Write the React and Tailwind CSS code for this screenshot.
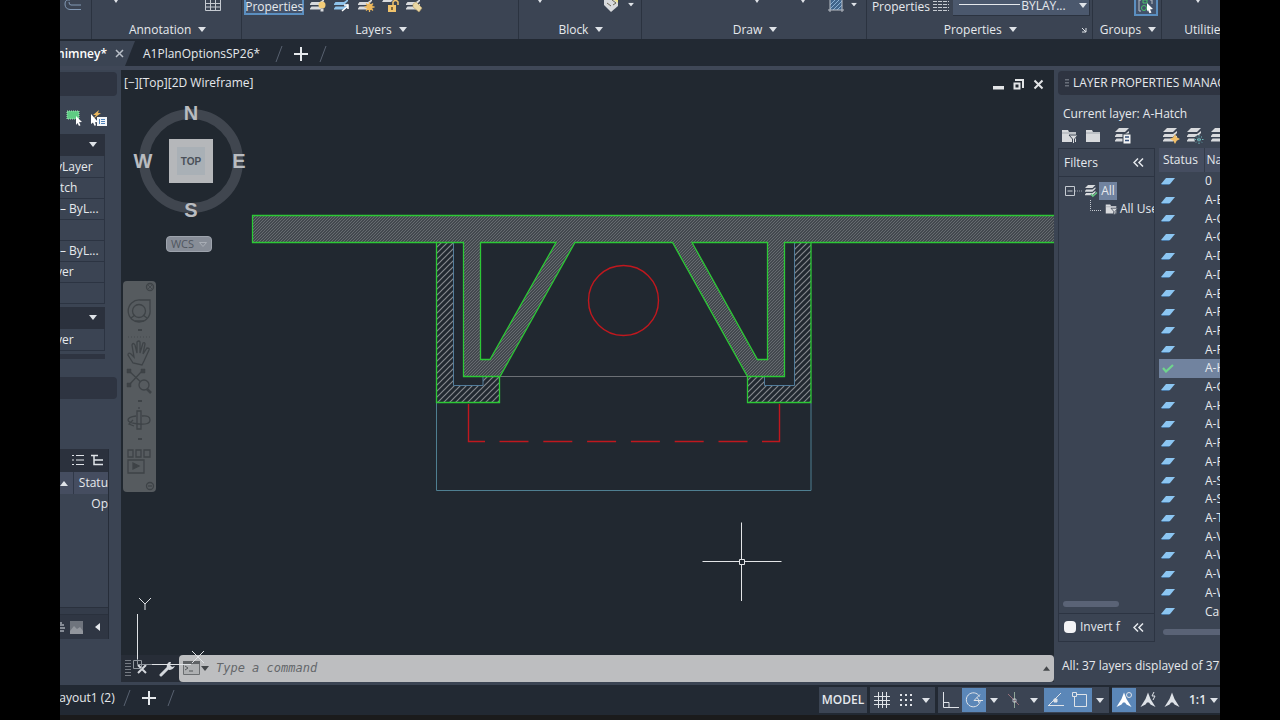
import clsx from "clsx";

const LAYERS = [
  "0", "A-E", "A-C", "A-C", "A-D", "A-D", "A-E", "A-F", "A-F", "A-F", "A-H", "A-G",
  "A-H", "A-L", "A-P", "A-R", "A-S", "A-S", "A-T", "A-V", "A-W", "A-W", "A-W", "Ca",
];

const PROPERTY_ROWS = ["yLayer", "tch", "– ByL...", "", "– ByL...", "yer", ""];

function Caret({ className }) {
  return (
    <svg viewBox="0 0 8 5" className={clsx("w-2 h-[5px] shrink-0", className)} fill="#dfe3e8">
      <path d="M0 0h8L4 5z" />
    </svg>
  );
}

function LayerStack({ badge, blue }) {
  const c = blue ? "#8fc3ea" : "#d8dadd";
  return (
    <svg viewBox="0 0 18 18" className="w-[18px] h-[18px] shrink-0">
      <path d="M5 1h10l-4 4H1z" fill="#d8dadd" />
      <path d="M1 9l1.500-2H11l4-3v2l-4 4H1zM1 13.500l1.500-2H11l4-3v2l-4 4H1z" fill={c} />
      {badge === "bulb" && (
        <g>
          <circle cx="13" cy="10" r="3.500" fill="#f3cd78" />
          <path d="M11.500 13.500h3v3h-3z" fill="#d8dadd" />
        </g>
      )}
      {badge === "arrow" && <path d="M9 16l6-5M11 10h4v4" stroke="#fff" strokeWidth="1.500" fill="none" />}
      {badge === "sun" && (
        <g stroke="#edb85c" strokeWidth="1.300">
          <circle cx="12.500" cy="12" r="2.500" fill="#f3cd78" />
          <path d="M12.500 7v10M7.500 12h10M9 8.500l7 7M16 8.500l-7 7" />
        </g>
      )}
      {badge === "tag" && <path d="M8 9l3-2 6 6-3 4-6-5z" fill="#e9d7a5" stroke="#b89d67" strokeWidth=".6" />}
      {badge === "star" && <path d="M13 7l1.700 3.300L18 12l-3.300 1.700L13 17l-1.700-3.300L8 12l3.300-1.700z" fill="#f2bf69" />}
      {badge === "frost" && (
        <g>
          <circle cx="13" cy="12.500" r="4.500" fill="#3b4453" />
          <path d="M13 8v9M8.500 12.500h9M10 9.500l6 6M16 9.500l-6 6" stroke="#6fb9bd" strokeDasharray="1.500 1" fill="none" />
        </g>
      )}
      {badge === "check" && <path d="M9 13l2.500 3L17 11" stroke="#64c781" strokeWidth="2" fill="none" />}
      {badge === "card" && (
        <g>
          <path d="M9 7h8v10H9z" fill="#f1f2f3" stroke="#3b4453" />
          <path d="M11 10h4M11 13.500h4" stroke="#35507a" strokeWidth="1.500" />
        </g>
      )}
    </svg>
  );
}

function Folder({ filter }) {
  return (
    <svg viewBox="0 0 18 18" className="w-[18px] h-[18px] shrink-0" fill="#d8dadd">
      <path d="M2 3h6l1 2h7v10H2z" />
      <path d="M2 6h14" stroke="#8d939c" strokeWidth=".7" />
      {filter && <path d="M9 8h9l-3.500 4v5l-2-1v-4z" stroke="#3b4453" strokeWidth="1" />}
    </svg>
  );
}

function FlyoutTip({ className }) {
  return (
    <svg viewBox="0 0 8 4" className={clsx("w-2 h-1 shrink-0", className)}>
      <path d="M2 0h4L4 3z" fill="#dfe3e8" />
    </svg>
  );
}

function RibbonPanel({ name, className, children, launcher }) {
  return (
    <section className={clsx("relative min-w-0 flex flex-col border-r border-[#2b3340]", className)}>
      <div className="h-[18px]">{children}</div>
      {name && (
        <button className="h-[21px] pt-[2px] pl-[2px] flex items-center justify-center gap-[7px] whitespace-nowrap">
          {name}
          <Caret />
        </button>
      )}
      {launcher && (
        <svg viewBox="0 0 6 6" className="absolute right-[5px] bottom-[6px] w-[6px] h-[6px]">
          <path d="M1 1l4 4M5 1v4H1" stroke="#dfe3e8" fill="none" />
        </svg>
      )}
    </section>
  );
}

function Ribbon() {
  return (
    <header className="flex h-[39px] shrink-0 bg-[#3b4453] overflow-hidden">
      <RibbonPanel className="w-8 shrink-0">
        <svg viewBox="0 0 20 16" className="ml-[3px] w-5 h-4">
          <path d="M18 9.500H7Q2 9 2 4T7 0M18 5H8Q6 5 6 2" stroke="#8299b5" fill="none" />
        </svg>
      </RibbonPanel>
      <RibbonPanel name="Annotation" className="flex-[150]">
        <div className="flex justify-between pl-5 pr-5">
          <FlyoutTip />
          <svg viewBox="0 0 16 12" className="w-4 h-3">
            <path d="M.5 0v10.500h15V0M.5 3.500h15M.5 7h15M5.500 0v10M10.500 0v10" stroke="#c5cad1" fill="none" />
          </svg>
        </div>
      </RibbonPanel>
      <RibbonPanel name="Layers" className="flex-[277]">
        <div className="flex items-start">
          <button className="ml-[2px] h-[15px] w-[60px] shrink-0 border-2 border-t-0 border-[#5b8fc0] bg-[#43526a] flex items-center justify-center leading-3">
            Properties
          </button>
          <div className="-mt-[5px] ml-[5px] flex gap-[6px]">
            <LayerStack badge="bulb" />
            <LayerStack badge="arrow" blue />
            <LayerStack badge="sun" />
            <svg viewBox="0 0 18 18" className="w-[18px] h-[18px] shrink-0">
              <path d="M3 4h10l-3 3H1z" fill="#d8dadd" />
              <path d="M7 10h8v7H7z" fill="#f0c36c" />
              <path d="M12 10V7q2.500-3 5 0v3" stroke="#f0c36c" strokeWidth="1.500" fill="none" />
              <path d="M11 12v3" stroke="#5a4a28" strokeWidth="1.500" />
            </svg>
            <LayerStack badge="tag" />
          </div>
        </div>
      </RibbonPanel>
      <RibbonPanel name="Block" className="flex-[123]">
        <div className="flex justify-between items-start pl-[17px] pr-[6px]">
          <FlyoutTip />
          <div className="flex gap-2">
            <svg viewBox="0 0 16 12" className="w-4 h-3">
              <path d="M1 0v5l7 7 7-6V0z" fill="#d8dadd" />
              <path d="M9 0l4 3-3 2M4 3l4 3" stroke="#6d6855" fill="none" />
              <path d="M11 0h4v3z" fill="#eee48c" />
            </svg>
            <Caret className="mt-[2px] scale-75" />
          </div>
        </div>
      </RibbonPanel>
      <RibbonPanel name="Draw" className="flex-[225]">
        <div className="flex justify-end items-start pr-[8px]">
          <FlyoutTip />
          <FlyoutTip className="ml-[38px]" />
          <svg viewBox="0 0 16 13" className="ml-[21px] w-4 h-[13px]">
            <path d="M2 0h12v10H2z" fill="#40658c" />
            <path d="M2 5l5-5M2 9l9-9M5 10l9-9M9 10l5-5" stroke="#9cc3e6" strokeWidth=".8" />
            <path d="M2 0v12M14 0v12M0 10h16" stroke="#b9bec6" fill="none" />
          </svg>
          <Caret className="ml-[6px] mt-[2px] scale-75" />
        </div>
      </RibbonPanel>
      <RibbonPanel name="Properties" className="flex-[226]" launcher>
        <div className="flex items-start pl-[5px] pr-[2px]">
          <span className="leading-[13px]">Properties</span>
          <svg viewBox="0 0 16 12" className="ml-[3px] w-4 h-3 shrink-0">
            <path d="M0 1.500h16M0 4.500h16M0 7.500h16M0 10.500h16" stroke="#c5cad1" strokeDasharray="4 1" />
          </svg>
          <button className="ml-[4px] h-4 flex-1 min-w-0 flex items-start gap-px pl-[6px] pr-[2px] bg-[#4b586d] border-b border-r border-[#2b3340] leading-[11px]">
            <span className="mt-1 h-px flex-1 bg-[#e6e9ed]" />
            BYLAY...
            <Caret className="ml-[12px] mt-[3px]" />
          </button>
        </div>
      </RibbonPanel>
      <RibbonPanel name="Groups" className="flex-[69]">
        <button className="block ml-auto mr-[3px] w-6 h-4 border-2 border-t-0 border-[#5b8fc0] bg-[#43526a]" aria-label="Group selection">
          <svg viewBox="0 0 20 14" className="w-5 h-[14px]">
            <path d="M5 0H3v11h2M14 0h2v4" stroke="#b9bec6" fill="none" />
            <circle cx="8" cy="8" r="2.500" stroke="#4cc26c" fill="none" />
            <path d="M7 0h4v3H7z" stroke="#4cc26c" fill="none" />
            <path d="M11 3l6 6-3 .5 1.500 3-2 .8L12 10l-1 1.500z" fill="#fff" />
          </svg>
        </button>
      </RibbonPanel>
      <div className="flex-[58] min-w-0">
        <div className="h-[18px] pl-8">
          <FlyoutTip />
        </div>
        <button className="h-[21px] pt-[2px] pl-[22px] flex items-center">Utilities</button>
      </div>
    </header>
  );
}

function Slash() {
  return (
    <svg viewBox="0 0 8 18" className="w-2 h-[18px] shrink-0">
      <path d="M1 17L7 1" stroke="#586170" />
    </svg>
  );
}

function Plus() {
  return (
    <svg viewBox="0 0 14 14" className="w-[14px] h-[14px]">
      <path d="M7 0v14M0 7h14" stroke="#e6e9ed" strokeWidth="2" />
    </svg>
  );
}

function FileTabs() {
  return (
    <nav className="h-[27px] shrink-0 flex items-center bg-[#222933]">
      <div className="relative h-full w-[75px] shrink-0 flex items-center pt-[2px]">
        <svg viewBox="0 0 75 27" preserveAspectRatio="none" className="absolute inset-0 w-full h-full">
          <path d="M0 2h75L65 27H0z" fill="#3b4453" />
        </svg>
        <button className="relative h-full w-[47px] flex items-center justify-end font-semibold text-white whitespace-nowrap">
          himney*
        </button>
        <button className="relative ml-2" aria-label="Close drawing">
          <svg viewBox="0 0 9 9" className="w-[9px] h-[9px]">
            <path d="M1 1l7 7M8 1L1 8" stroke="#b9bfc8" strokeWidth="1.500" />
          </svg>
        </button>
      </div>
      <button className="ml-2 pt-[3px] w-28 text-left whitespace-nowrap">A1PlanOptionsSP26*</button>
      <div className="ml-5 pt-[2px] flex items-center gap-[11px]">
        <Slash />
        <button aria-label="New drawing"><Plus /></button>
        <Slash />
      </div>
    </nav>
  );
}

function PropertiesPalette() {
  return (
    <aside className="w-[61px] shrink-0 bg-[#3b4453] flex flex-col overflow-hidden whitespace-nowrap">
      <div className="mt-[2px] mr-1 h-6 shrink-0 rounded-r bg-[#2e3441]" />
      <div className="h-[38px] shrink-0 flex items-center gap-[6px] pl-[6px] pt-[6px]">
        <svg viewBox="0 0 18 18" className="w-[18px] h-[18px]">
          <path d="M1 2h12v8H1z" fill="#5fcb83" stroke="#a8e5ba" strokeDasharray="1 1" />
          <path d="M10 7l6 6-3 .3 1.500 3-1.500.7-1.500-3L10 16z" fill="#fff" />
        </svg>
        <svg viewBox="0 0 18 18" className="w-[18px] h-[18px]">
          <path d="M9 1L3 6h3L3 10l8-6H8z" fill="#e9b65c" />
          <path d="M1 5l7 8-3 .2 1 3-1.500.6L3 13.500 1 15z" fill="#fff" />
          <path d="M7 8h10v9H7z" fill="#f3f5f7" />
          <path d="M9.500 10v5M11 10.500h4M11 12.500h4M11 14.500h4" stroke="#5182b8" />
        </svg>
      </div>
      <button className="mr-4 h-[22px] shrink-0 flex items-center justify-end pr-2 pb-px bg-[#2b313d]" aria-label="General">
        <Caret />
      </button>
      <div className="mr-4 pt-px shrink-0 border-r border-[#2c3442]">
        {PROPERTY_ROWS.map((row, i) => (
          <div key={i} className="h-[21px] flex items-center border-b border-[#2c3442] leading-4">
            <span className={clsx(row.startsWith("y") && "-ml-1")}>{row}</span>
          </div>
        ))}
      </div>
      <button className="mt-[3px] mr-4 h-[22px] shrink-0 flex items-center justify-end pr-2 pb-px bg-[#2b313d]" aria-label="3D Visualization">
        <Caret />
      </button>
      <div className="mr-4 h-[22px] shrink-0 flex items-center border-r border-b border-[#2c3442]">
        <span className="-ml-1">yer</span>
      </div>
      <div className="mt-[3px] mr-4 h-[5px] shrink-0 bg-[#2e3441]" />
      <div className="mt-[18px] mr-1 h-[22px] shrink-0 rounded-r bg-[#2e3441]" />
      <div className="mt-[50px] mr-3 flex-1 min-h-0 flex flex-col border-r border-[#262d39]">
        <div className="h-[23px] shrink-0 flex items-center justify-end gap-[7px] pr-[5px] pb-px bg-[#2b313d]">
          <svg viewBox="0 0 12 12" className="w-3 h-3">
            <path d="M0 1.500h2M0 6h2M0 10.500h2M4 1.500h8M4 6h8M4 10.500h8" stroke="#dfe3e8" strokeWidth="1.200" />
          </svg>
          <svg viewBox="0 0 12 12" className="w-3 h-3">
            <path d="M0 1.500h7M3 2v8.500h3M3 6h3M6 6h6M6 10.500h6" stroke="#dfe3e8" strokeWidth="1.500" fill="none" />
          </svg>
        </div>
        <div className="h-[22px] shrink-0 flex items-center bg-[#454d60]">
          <span className="w-4 h-full border-r border-[#303848] flex items-center">
            <Caret className="rotate-180" />
          </span>
          <span className="ml-[5px]">Statu</span>
        </div>
        <div className="h-5 shrink-0 flex items-center justify-end">Op</div>
        <div className="flex-1" />
        <div className="h-2 shrink-0 bg-[#343c4a] border-y border-[#2a313d]" />
        <div className="h-6 shrink-0 flex items-center bg-[#2f3643]">
          <svg viewBox="0 0 6 12" className="w-[6px] h-3">
            <path d="M0 1h2v2h2v2H0zM0 6h5v2H0zM0 9h4v2H0z" fill="#858b95" />
          </svg>
          <svg viewBox="0 0 13 13" className="ml-[4px] w-[13px] h-[13px]">
            <path d="M0 0h13v13H0z" fill="#6f747d" />
            <path d="M0 10l4-5 3 3 3-2 3 4v3H0z" fill="#92969d" />
          </svg>
          <button className="ml-auto mr-2" aria-label="Collapse">
            <svg viewBox="0 0 5 8" className="w-[5px] h-2"><path d="M5 0v8L0 4z" fill="#e6e9ed" /></svg>
          </button>
        </div>
      </div>
      <div className="h-[46px] shrink-0" />
    </aside>
  );
}

// Chimney plan in window coordinates
function Plan() {
  return (
    <svg viewBox="121 70 933 585" preserveAspectRatio="xMinYMin slice" className="absolute inset-0 w-full h-full">
      <defs>
        <pattern id="dense" width="3" height="3" patternUnits="userSpaceOnUse">
          <path d="M0 0h3v3H0z" fill="#43484e" />
          <path d="M-1 1L1-1M0 3L3 0M2 4L4 2" stroke="#6f7378" strokeWidth=".8" />
        </pattern>
        <pattern id="brick" width="6" height="6" patternUnits="userSpaceOnUse">
          <path d="M-1 1L1-1M0 6L6 0M5 7L7 5" stroke="#85888d" strokeWidth="1.200" />
        </pattern>
      </defs>
      <path d="M436.500 403V490.500H811V403" stroke="#4f7f91" fill="none" />
      <path d="M500 376.500H748" stroke="#6c7075" />
      <path d="M436.500 242.500H453.500V386H483V376.500H500V403H436.500z" fill="url(#brick)" />
      <path d="M811 242.500H794.500V386H764.500V376.500H747.500V403H811z" fill="url(#brick)" />
      <path d="M453.500 242.500V385.500H483V376.500M794.500 242.500V385.500H764.500V376.500" stroke="#527c9b" fill="none" />
      <g stroke="#2cc835" strokeWidth="1.300">
        <path d="M436.500 242.500V402.500H499.500V376.500M811 242.500V402.500H747.500V376.500" fill="none" />
        <path
          d="M252.500 215.500H1060V242.500H784.500V376.500H747.500L672.500 242.500H575L500 376.500H463.500V242.500H252.500zM480.500 242.500V359.500H490L556 242.500zM692 242.500L757.500 359.500H767.500V242.500z"
          fill="url(#dense)"
          fillRule="evenodd"
        />
      </g>
      <g stroke="#c0181e" strokeWidth="1.400" fill="none">
        <circle cx="623.500" cy="300.500" r="35" />
        <path d="M468.500 404V441.500H485" />
        <path d="M499.500 441.500H762" strokeDasharray="29 14.800" />
        <path d="M762 441.500H779.500V404" />
      </g>
      <path d="M741.500 522.500V559M741.500 564V601M702.500 561.500H739M744 561.500H781.500M739.500 559.500h5v5h-5z" stroke="#e3e5e7" fill="none" />
    </svg>
  );
}

function ViewCube() {
  return (
    <svg viewBox="0 0 116 150" className="w-[116px] h-[150px] shrink-0" fontFamily="Liberation Sans, Arial, sans-serif">
      <circle cx="60" cy="61" r="47" fill="none" stroke="#40464f" strokeWidth="10" />
      <g fill="#b9bcc0" fontWeight="bold" fontSize="20" textAnchor="middle">
        <text x="60" y="20">N</text>
        <text x="60" y="117">S</text>
        <text x="12" y="68">W</text>
        <text x="108" y="68">E</text>
      </g>
      <path d="M38 39h44v44H38z" fill="#b5b7ba" />
      <path d="M46 47h28v28H46z" fill="#a9b0b6" />
      <text x="60" y="65" textAnchor="middle" fontSize="10" fontWeight="bold" fill="#4a5059">
        TOP
      </text>
    </svg>
  );
}

function NavBar() {
  return (
    <div className="w-[33px] h-[211px] rounded bg-[#565b5f]">
      <svg viewBox="0 0 33 211" className="w-full h-full" fill="none" stroke="#3e4347" strokeWidth="1.300">
        <circle cx="27" cy="6" r="3.500" />
        <path d="M25 4l4 4M29 4l-4 4" strokeWidth=".8" />
        <path d="M17 19h10v9a11 11 0 1 1-10-9z" />
        <circle cx="16" cy="30" r="6.500" />
        <path d="M8 37l4-3M24 37l-4-3M12 40h9" />
        <path d="M15 49h4M15 120h4M15 158h4" strokeWidth="2" />
        <path d="M5 56h22" strokeDasharray="1 2" strokeWidth=".7" />
        <path d="M10 82l-5-8q0-3 3-1l3 3-2-12q1-3 3 0l2 8 0-11q2-2 3 0v11l3-10q2-1 2 1l-2 10 4-6q3 0 2 2l-5 11-2 4z" />
        <path d="M6 90l15 14M19 90L6 104" />
        <path d="M4 88h4v4H4zM18 88h4v4h-4zM4 102h4v4H4z" fill="#3e4347" strokeWidth=".5" />
        <circle cx="21" cy="104" r="5" fill="#565b5f" />
        <path d="M24 108l4 4" strokeWidth="2.500" />
        <path d="M14 130h4v18h-4z" />
        <path d="M13 135q-8 1-8 4t11 4 11-4-8-4M10 139l-4 4 5 2M16 126v2" />
        <path d="M5 169h5v7H5zM13 169h5v7h-5zM21 169h6v7h-6zM5 179h16v13H5z" />
        <path d="M10 182v6l6-3z" fill="#3e4347" />
        <circle cx="27" cy="205" r="3.500" />
        <path d="M25 205h4" />
      </svg>
    </div>
  );
}

function CommandLine() {
  return (
    <div className="relative h-[27px] flex items-center bg-[#272d37]">
      <svg viewBox="0 0 6 18" className="ml-1 w-[6px] h-[18px] shrink-0">
        <path d="M1 0v18M3 0v18M5 0v18" stroke="#c7cbd1" strokeDasharray="1 2" />
      </svg>
      <button className="ml-[6px]" aria-label="Close command line">
        <svg viewBox="0 0 10 10" className="w-[10px] h-[10px]">
          <path d="M1 1l8 8M9 1L1 9" stroke="#d3d7dc" strokeWidth="2" />
        </svg>
      </button>
      <button className="ml-3 mr-[4px]" aria-label="Customize">
        <svg viewBox="0 0 16 16" className="w-4 h-4">
          <path d="M2 14l8-8" stroke="#d3d7dc" strokeWidth="3" strokeLinecap="round" />
          <path d="M10 1q-3 2-2 6l2 2q4 0 6-4l-3 1-2-2 1-3z" fill="#d3d7dc" />
        </svg>
      </button>
      <div className="h-full flex-1 flex items-center rounded-sm bg-[#bdbec0] pl-1 pr-1 pb-px">
        <svg viewBox="0 0 17 14" className="w-[17px] h-[14px] shrink-0">
          <path d="M.5.5h16v13H.5z" stroke="#6b6e71" fill="#aeb0b2" />
          <path d="M0 0h17v3H0z" fill="#5f6265" />
          <path d="M2 5l3 2-3 2M6 10h4" stroke="#55585b" fill="none" />
        </svg>
        <svg viewBox="0 0 8 5" className="ml-px w-2 h-[5px] shrink-0"><path d="M0 0h8L4 5z" fill="#44474a" /></svg>
        <input
          type="text"
          aria-label="Command"
          placeholder="Type a command"
          className="ml-[7px] flex-1 min-w-0 bg-transparent outline-none italic text-[12px] font-['DejaVu_Sans_Mono',monospace] placeholder:text-[#64676a]"
        />
        <button aria-label="Command history">
          <svg viewBox="0 0 8 5" className="w-[7px] h-[5px]"><path d="M0 5h8L4 0z" fill="#44474a" /></svg>
        </button>
      </div>
    </div>
  );
}

function Viewport() {
  return (
    <main className="relative flex-1 min-w-0 flex flex-col bg-[#212830]">
      <div className="relative flex-1 min-h-0 overflow-hidden">
        <Plan />
        <div className="relative flex items-center justify-between pl-[3px] pr-[10px] h-[26px]">
          <span className="whitespace-nowrap">[−][Top][2D Wireframe]</span>
          <div className="flex items-center gap-[9px] pt-[2px]">
            <button aria-label="Minimize">
              <svg viewBox="0 0 11 11" className="w-[11px] h-[11px]"><path d="M0 7h11v3.500H0z" fill="#e3e5e7" /></svg>
            </button>
            <button aria-label="Restore">
              <svg viewBox="0 0 11 11" className="w-[11px] h-[11px]">
                <path d="M3 2V1h7v7H9M1.500 4.500h5v5h-5z" stroke="#e3e5e7" strokeWidth="2" fill="none" />
              </svg>
            </button>
            <button aria-label="Close">
              <svg viewBox="0 0 11 11" className="w-[11px] h-[11px]">
                <path d="M1.500 1.500l8 8M9.500 1.500L1.500 9.500" stroke="#e3e5e7" strokeWidth="2" />
              </svg>
            </button>
          </div>
        </div>
        <div className="relative w-[136px] flex justify-center mt-1">
          <ViewCube />
          <button className="absolute left-[45px] bottom-[-2px] w-[46px] h-4 rounded bg-[#878d97] border border-[#9ea4ad] flex items-center justify-center gap-[5px] text-[11px] text-[#50565f]">
            WCS
            <svg viewBox="0 0 8 5" className="w-2 h-[5px]"><path d="M.5.5h7L4 4.500z" stroke="#a8adb5" fill="none" /></svg>
          </button>
        </div>
        <div className="relative ml-[2px] mt-[31px]">
          <NavBar />
        </div>
      </div>
      <CommandLine />
      <svg viewBox="0 0 90 85" className="absolute left-0 bottom-0 w-[90px] h-[85px] pointer-events-none" fill="none" stroke="#dfe2e5">
        <path d="M16.500 17v45M31 67.500h39" />
        <path d="M12.500 63.500h8v8h-8zM16.500 62v5.500H31" stroke="#8f959c" />
        <path d="M18 1l6 6 6-6M24 7v6" />
        <path d="M71 54l12 12M83 54L71 66" />
      </svg>
    </main>
  );
}

function LayerPanel() {
  return (
    <aside className="w-[166px] shrink-0 flex flex-col bg-[#3b4453] pl-1 overflow-hidden whitespace-nowrap">
      <div className="mt-px h-6 shrink-0 flex items-center gap-[4px] pl-[7px] rounded-l bg-[#2e3441]">
        <svg viewBox="0 0 4 8" className="w-1 h-2 shrink-0">
          <path d="M1 0v8M3 0v8" stroke="#a4aab4" strokeDasharray="1.500 1.500" />
        </svg>
        LAYER PROPERTIES MANAGER
      </div>
      <div className="mt-[11px] pl-[5px] h-4 shrink-0 leading-4">Current layer: A-Hatch</div>
      <div className="h-[26px] shrink-0 flex items-center gap-[6px] pl-[2px] pt-[2px]">
        <Folder filter />
        <Folder />
        <span className="w-px h-full bg-[#2c3442]" />
        <LayerStack badge="card" />
        <span className="w-[18px] shrink-0" />
        <LayerStack badge="star" />
        <LayerStack badge="frost" />
        <LayerStack />
      </div>
      <div className="flex-1 min-h-0 flex gap-[4px]">
        <div className="w-[97px] shrink-0 flex flex-col border border-[#2c3442]">
          <div className="h-7 shrink-0 flex items-center justify-between pl-[5px] pr-[10px] border-b border-[#2c3442]">
            Filters
            <Chevrons />
          </div>
          <div className="pt-[5px] flex-1 overflow-hidden">
            <div className="h-[18px] flex items-center pl-[6px]">
              <svg viewBox="0 0 18 10" className="w-[18px] h-[10px] shrink-0">
                <path d="M.5.5h9v9h-9zM2.500 5h5" stroke="#c5cad1" fill="none" />
                <path d="M10 5h8" stroke="#9aa1ac" strokeDasharray="1 1" />
              </svg>
              <span className="-ml-px -mr-px scale-75"><LayerStack badge="check" /></span>
              <span className="h-[18px] w-[18px] text-center leading-[18px] bg-[#71839f]">All</span>
            </div>
            <div className="h-[18px] flex items-center pl-[31px]">
              <svg viewBox="0 0 12 18" className="w-3 h-[18px] shrink-0">
                <path d="M.5 0v10.500H12" stroke="#c5cad1" strokeDasharray="1 1" fill="none" />
              </svg>
              <span className="scale-75"><Folder filter /></span>
              All Use
            </div>
          </div>
          <div className="ml-1 mb-[6px] w-14 h-[6px] shrink-0 rounded-full bg-[#5a6376]" />
          <div className="h-[28px] shrink-0 flex items-center justify-between pl-[5px] pr-[10px] pb-px border-t border-[#2c3442]">
            <label className="flex items-center gap-1">
              <input type="checkbox" className="appearance-none w-3 h-3 rounded-sm bg-[#f3f3f5]" />
              Invert f
            </label>
            <Chevrons />
          </div>
        </div>
        <div className="flex-1 min-w-0 overflow-hidden">
          <table className="w-[120px] h-[473px] table-fixed border-collapse">
            <thead>
              <tr className="h-6 bg-[#454d60] text-left">
                <th className="w-[45px] pl-1 font-normal border-r border-[#343c4b]">Status</th>
                <th className="pl-[2px] font-normal">Name</th>
              </tr>
            </thead>
            <tbody>
              {LAYERS.map((name, i) => (
                <tr key={i} className={clsx("leading-[16px]", i === 10 && "bg-[#71839f]")}>
                  <td className="p-0 pl-[2px]">
                    {i === 10 ? (
                      <svg viewBox="0 0 14 9" className="w-[14px] h-[9px]">
                        <path d="M2 4l3 3.500L12 1" stroke="#6fd58d" strokeWidth="2.200" fill="none" />
                      </svg>
                    ) : (
                      <svg viewBox="0 0 14 7" className="w-[14px] h-[7px]">
                        <path d="M5 0h9L9 6H0z" fill="#8cc6f2" />
                        <path d="M0 6h9l-1 1H1z" fill="#4b7ba8" />
                      </svg>
                    )}
                  </td>
                  <td className="p-0 pl-px">{name}</td>
                </tr>
              ))}
            </tbody>
          </table>
          <div className="ml-1 mt-[8px] w-28 h-[6px] rounded-full bg-[#5a6376]" />
        </div>
      </div>
      <div className="h-[43px] shrink-0 pl-1 pt-4 leading-4">All: 37 layers displayed of 37 total layers</div>
    </aside>
  );
}

function Chevrons() {
  return (
    <button aria-label="Collapse">
      <svg viewBox="0 0 11 9" className="w-[11px] h-[9px]">
        <path d="M5 .5l-4 4 4 4M10 .5l-4 4 4 4" stroke="#e6e9ed" strokeWidth="1.500" fill="none" />
      </svg>
    </button>
  );
}

function Tool({ label, active, children }) {
  return (
    <button
      aria-label={label}
      className={clsx("w-6 h-6 shrink-0 flex items-center justify-center", active && "bg-[#5b87b8]")}
    >
      <svg viewBox="0 0 18 18" className="w-[18px] h-[18px]" stroke="#dfe3e8" fill="none">
        {children}
      </svg>
    </button>
  );
}

const ANNO = "M9 1.500L11.500 8l5 8-5-2.500-1.500-2H8l-1.500 2-5 2.500 5-8z";

function StatusBar() {
  return (
    <footer className="h-[30px] shrink-0 flex items-center bg-[#222933] overflow-hidden">
      <div className="flex items-center pb-1">
        <button className="-ml-[7px] whitespace-nowrap">Layout1 (2)</button>
        <div className="ml-2 flex items-center gap-[11px]">
          <Slash />
          <button aria-label="New layout"><Plus /></button>
          <Slash />
        </div>
      </div>
      <div className="ml-auto flex h-[26px] gap-[3px] [&>div]:bg-[#3b4453] [&>div]:flex [&>div]:items-center">
        <div className="w-12 justify-center font-semibold">
          <button>MODEL</button>
        </div>
        <div className="w-[65px]">
          <Tool label="Grid">
            <path d="M5.500 1v16M9.500 1v16M13.500 1v16M1 5.500h16M1 9.500h16M1 13.500h16" />
          </Tool>
          <Tool label="Snap">
            <path d="M3 4h12M3 9h12M3 14h12" strokeWidth="2" strokeDasharray="2 3" />
          </Tool>
          <Caret className="ml-1" />
        </div>
        <div className="w-[171px]">
          <Tool label="Ortho">
            <path d="M2.500 1v15.500H18M3 11.500h5v5" />
          </Tool>
          <Tool label="Polar" active>
            <path d="M14.500 5.500a7 7 0 1 0 .8 4M9 9.500h9M9 9.500l6-6M12 6.500q2 1 1.500 5" />
          </Tool>
          <Caret className="ml-1 mr-1" />
          <Tool label="Isometric drafting">
            <path d="M9.500 1v16" stroke="#8fa598" />
            <path d="M3 3l11 11" stroke="#96707a" />
            <path d="M8 8h3v3H8z" strokeWidth=".7" />
          </Tool>
          <Caret className="ml-1 mr-[6px]" />
          <Tool label="Object snap tracking" active>
            <path d="M1 14.500h16M2 14L14 2" />
            <path d="M7 8h3v3H7z" fill="#dfe3e8" />
          </Tool>
          <Tool label="Object snap" active>
            <path d="M3.500 3.500h12v12h-12z" />
            <path d="M1.500 1.500h4v4h-4z" fill="#5b87b8" />
          </Tool>
          <Caret className="ml-1" />
        </div>
        <div className="w-[108px]">
          <Tool label="Annotation visibility" active>
            <path d={ANNO} fill="#fff" stroke="none" />
            <circle cx="14" cy="4" r="2.500" />
          </Tool>
          <Tool label="Auto scale">
            <path d={ANNO} fill="#dfe3e8" stroke="none" />
            <path d="M15 1l-2 4h3l-2 4" />
          </Tool>
          <Tool label="Annotation scale">
            <path d={ANNO} fill="#dfe3e8" stroke="none" />
          </Tool>
          <button className="ml-[5px] flex items-center gap-1 font-semibold">
            1:1
            <Caret />
          </button>
        </div>
      </div>
    </footer>
  );
}

export default function App() {
  return (
    <div className="h-screen bg-black px-[60px] overflow-hidden">
      <div className="h-full flex flex-col overflow-hidden bg-[#3b4453] text-[12px] text-[#e6e9ed] font-['Open_Sans','Noto_Sans',sans-serif]">
        <Ribbon />
        <FileTabs />
        <div className="h-1 shrink-0 bg-[#3f4757]" />
        <div className="flex-1 min-h-0 flex">
          <PropertiesPalette />
          <div className="flex-1 min-w-0 flex flex-col">
            <Viewport />
            <div className="h-[3px] shrink-0 bg-[#3b4453]" />
          </div>
          <LayerPanel />
        </div>
        <StatusBar />
        <div className="h-[5px] shrink-0 bg-[#1b1b1c]" />
      </div>
    </div>
  );
}
